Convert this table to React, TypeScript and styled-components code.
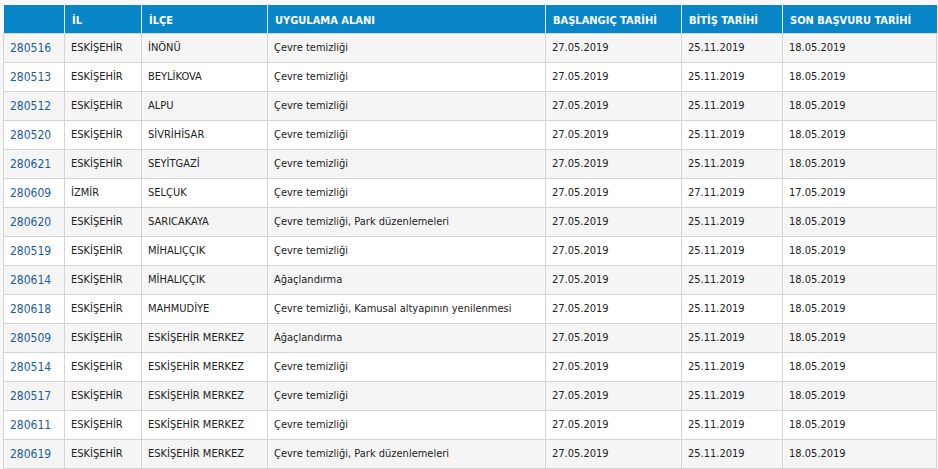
import React from "react";
import styled, { createGlobalStyle } from "styled-components";

const GlobalStyle = createGlobalStyle`
  html, body {
    margin: 0;
    padding: 0;
    background: #f7f7f7;
  }
  body {
    font-family: "DejaVu Sans Condensed", "DejaVu Sans", Verdana, sans-serif;
  }
`;

const Page = styled.div`
  padding: 5px 2px 0 3px;
  background: #f7f7f7;
`;

const Table = styled.table`
  width: 933px;
  table-layout: fixed;
  border-collapse: collapse;
  font-size: 11px;
  color: #222;
`;

const Col = styled.col<{ $width: number }>`
  width: ${(p) => p.$width}px;
`;

const HeadCell = styled.th`
  box-sizing: border-box;
  height: 28px;
  padding: 3px 7px 0;
  background: #0785c7;
  color: #fff;
  font-weight: 700;
  font-size: 11px;
  text-align: left;
  white-space: nowrap;
  overflow: hidden;
  border-left: 1px solid #e4eef5;
  &:first-child {
    border-left: 0;
  }
`;

const Row = styled.tr<{ $odd: boolean }>`
  background: ${(p) => (p.$odd ? "#f5f5f5" : "#ffffff")};
`;

const Cell = styled.td`
  box-sizing: border-box;
  height: 29px;
  padding: 0 7px 0 6px;
  border: 1px solid #d4d4d4;
  white-space: nowrap;
  overflow: hidden;
`;

const IdLink = styled.a`
  color: #1c5c9c;
  font-size: 12px;
  text-decoration: none;
`;

const columns = [
  { label: "", width: 61 },
  { label: "İL", width: 77 },
  { label: "İLÇE", width: 126 },
  { label: "UYGULAMA ALANI", width: 278 },
  { label: "BAŞLANGIÇ TARİHİ", width: 136 },
  { label: "BİTİŞ TARİHİ", width: 101 },
  { label: "SON BAŞVURU TARİHİ", width: 154 },
];

const CEVRE = "Çevre temizliği";
const PARK = "Çevre temizliği, Park düzenlemeleri";

const rows = [
  ["280516", "ESKİŞEHİR", "İNÖNÜ", CEVRE, "27.05.2019", "25.11.2019", "18.05.2019"],
  ["280513", "ESKİŞEHİR", "BEYLİKOVA", CEVRE, "27.05.2019", "25.11.2019", "18.05.2019"],
  ["280512", "ESKİŞEHİR", "ALPU", CEVRE, "27.05.2019", "25.11.2019", "18.05.2019"],
  ["280520", "ESKİŞEHİR", "SİVRİHİSAR", CEVRE, "27.05.2019", "25.11.2019", "18.05.2019"],
  ["280621", "ESKİŞEHİR", "SEYİTGAZİ", CEVRE, "27.05.2019", "25.11.2019", "18.05.2019"],
  ["280609", "İZMİR", "SELÇUK", CEVRE, "27.05.2019", "27.11.2019", "17.05.2019"],
  ["280620", "ESKİŞEHİR", "SARICAKAYA", PARK, "27.05.2019", "25.11.2019", "18.05.2019"],
  ["280519", "ESKİŞEHİR", "MİHALIÇÇIK", CEVRE, "27.05.2019", "25.11.2019", "18.05.2019"],
  ["280614", "ESKİŞEHİR", "MİHALIÇÇIK", "Ağaçlandırma", "27.05.2019", "25.11.2019", "18.05.2019"],
  ["280618", "ESKİŞEHİR", "MAHMUDİYE", "Çevre temizliği, Kamusal altyapının yenilenmesi", "27.05.2019", "25.11.2019", "18.05.2019"],
  ["280509", "ESKİŞEHİR", "ESKİŞEHİR MERKEZ", "Ağaçlandırma", "27.05.2019", "25.11.2019", "18.05.2019"],
  ["280514", "ESKİŞEHİR", "ESKİŞEHİR MERKEZ", CEVRE, "27.05.2019", "25.11.2019", "18.05.2019"],
  ["280517", "ESKİŞEHİR", "ESKİŞEHİR MERKEZ", CEVRE, "27.05.2019", "25.11.2019", "18.05.2019"],
  ["280611", "ESKİŞEHİR", "ESKİŞEHİR MERKEZ", CEVRE, "27.05.2019", "25.11.2019", "18.05.2019"],
  ["280619", "ESKİŞEHİR", "ESKİŞEHİR MERKEZ", PARK, "27.05.2019", "25.11.2019", "18.05.2019"],
];

const App: React.FC = function () {
  return (
    <>
      <GlobalStyle />
      <Page>
        <Table>
          <colgroup>
            {columns.map((c, i) => (
              <Col key={i} $width={c.width} />
            ))}
          </colgroup>
          <thead>
            <tr>
              {columns.map((c, i) => (
                <HeadCell key={i}>{c.label}</HeadCell>
              ))}
            </tr>
          </thead>
          <tbody>
            {rows.map((r, i) => (
              <Row key={r[0]} $odd={i % 2 === 0}>
                <Cell>
                  <IdLink href="#">{r[0]}</IdLink>
                </Cell>
                {r.slice(1).map((v, j) => (
                  <Cell key={j}>{v}</Cell>
                ))}
              </Row>
            ))}
          </tbody>
        </Table>
      </Page>
    </>
  );
};

export default App;
